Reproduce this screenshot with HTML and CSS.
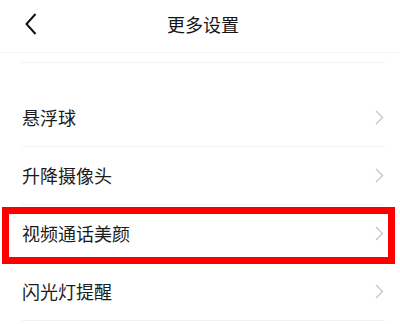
FILE: index.html
```html
<!DOCTYPE html>
<html lang="zh-CN">
<head>
<meta charset="utf-8">
<link rel="stylesheet" href="styles.css">
</head>
<body>
<div class="page">
  <header class="header">
    <svg class="back" width="12" height="22" viewBox="0 0 12 22"><polyline points="10.5,1 1.5,11 10.5,21" fill="none" stroke="#111" stroke-width="2"/></svg>
    <h1 class="title">更多设置</h1>
  </header>
  <div class="top-line"></div>
  <ul class="list">
    <li class="row"><div class="row-inner"><span class="label">悬浮球</span><svg class="chev" width="9" height="15" viewBox="0 0 9 15"><polyline points="1,1 7.5,7.5 1,14" fill="none" stroke="#c4c4c4" stroke-width="1.3"/></svg></div></li>
    <li class="row"><div class="row-inner"><span class="label">升降摄像头</span><svg class="chev" width="9" height="15" viewBox="0 0 9 15"><polyline points="1,1 7.5,7.5 1,14" fill="none" stroke="#c4c4c4" stroke-width="1.3"/></svg></div></li>
    <li class="row highlighted"><div class="row-inner"><span class="label">视频通话美颜</span><svg class="chev" width="9" height="15" viewBox="0 0 9 15"><polyline points="1,1 7.5,7.5 1,14" fill="none" stroke="#c4c4c4" stroke-width="1.3"/></svg></div><div class="mark"></div></li>
    <li class="row"><div class="row-inner"><span class="label">闪光灯提醒</span><svg class="chev" width="9" height="15" viewBox="0 0 9 15"><polyline points="1,1 7.5,7.5 1,14" fill="none" stroke="#c4c4c4" stroke-width="1.3"/></svg></div></li>
  </ul>
</div>
</body>
</html>
```
FILE: styles.css
```css
* { box-sizing: border-box; }
html, body { margin: 0; padding: 0; background: #fff; }
body {
  font-family: "Noto Sans CJK SC", "Noto Sans", sans-serif;
  color: #1c1c1c;
  width: 400px;
  height: 324px;
  overflow: hidden;
}
.header {
  position: relative;
  height: 53px;
  display: flex;
  align-items: center;
  justify-content: center;
  margin: 0 2px;
  border-bottom: 1px solid #f4f4f4;
}
.back {
  position: absolute;
  left: 23px;
  top: 13px;
}
.title {
  margin: 0 0 4px 6px;
  font-size: 18px;
  font-weight: 400;
  line-height: 24px;
  color: #151515;
}
.top-line {
  margin: 9px 15px 0 20px;
  border-top: 1px solid #f3f3f3;
}
.list {
  list-style: none;
  margin: 0;
  padding: 26px 0 0;
}
.row {
  position: relative;
  padding: 0 15px 0 22px;
}
.row-inner {
  height: 58px;
  display: flex;
  align-items: center;
  justify-content: space-between;
  border-bottom: 1px solid #f2f2f2;
}
.label {
  font-size: 18px;
  line-height: 24px;
  margin-top: -2px;
}
.chev {
  margin-right: 1px;
}
.mark {
  position: absolute;
  left: 2px;
  top: 2px;
  width: 393px;
  height: 57px;
  border: 7px solid #f00;
}
```
